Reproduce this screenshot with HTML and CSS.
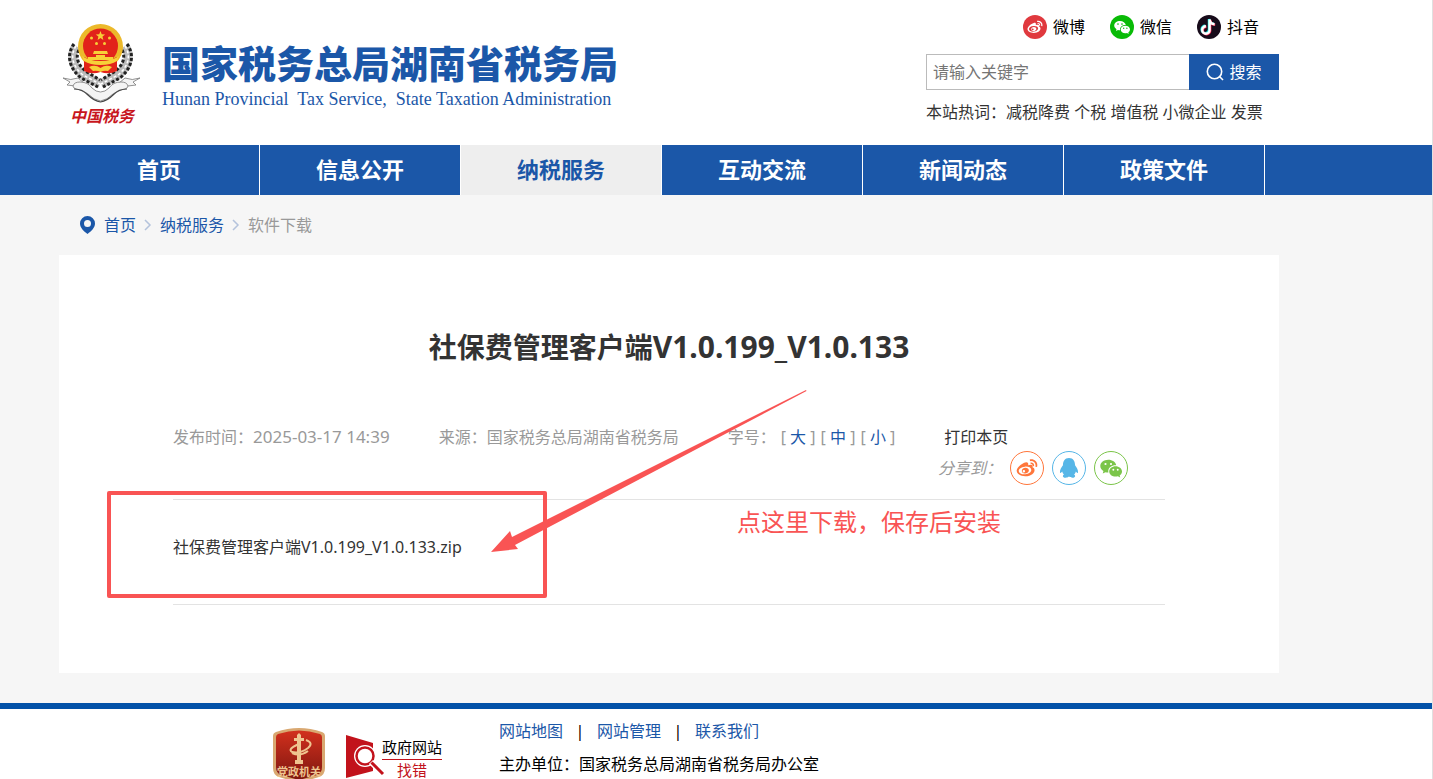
FILE: index.html
```html
<!DOCTYPE html>
<html lang="zh-CN">
<head>
    <meta charset="UTF-8">
    <meta name="viewport" content="width=device-width, initial-scale=1.0">
    <title>社保费管理客户端V1.0.199_V1.0.133</title>
    <link rel="stylesheet" href="styles.css">
</head>
<body>
    <header class="header wrap">
        <a class="logo" href="#">
            <span class="emblem">
                <svg width="80" height="80" viewBox="0 0 80 80" aria-hidden="true">
                    <!-- 麦穗 -->
                    <g fill="none" stroke="#bbb" stroke-width="9">
                        <path d="M14 22C8 31 10 42 21 51L38 60"/>
                        <path d="M63 22C69 31 67 42 56 51L39 60"/>
                    </g>
                    <g fill="none" stroke="#222" stroke-width="3" stroke-dasharray="3 2">
                        <path d="M12 20C4 31 7 44 19 54L36 63"/>
                        <path d="M65 20C73 31 70 44 58 54L41 63"/>
                        <path d="M17 26C13 33 16 42 25 48L38 56"/>
                        <path d="M60 26C64 33 61 42 52 48L39 56"/>
                    </g>
                    <g fill="none" stroke="#fff" stroke-width="1.5" stroke-dasharray="3 2">
                        <path d="M14 22C8 31 10 42 21 51L38 60"/>
                        <path d="M63 22C69 31 67 42 56 51L39 60"/>
                    </g>
                    <circle cx="38.500" cy="22.500" r="22.500" fill="#ecb92b"/>
                    <circle cx="38.500" cy="22" r="17.500" fill="#e2231a"/>
                    <path d="M22 33q16 8 33 0v14q-8 4-16.500 1Q30 51 22 47z" fill="#e2231a"/>
                    <g fill="#f7d038">
                        <path d="M38.500 7l1.200 3.200 3.400.2-2.600 2.200.8 3.300-2.800-1.800-2.900 1.800.8-3.300-2.600-2.200 3.400-.2z"/>
                        <circle cx="29.500" cy="14" r="1.500"/><circle cx="47.500" cy="14" r="1.500"/>
                        <circle cx="34.500" cy="19.500" r="1.500"/><circle cx="42.500" cy="19.500" r="1.500"/>
                        <path d="M32 27h13l1 3H31zM34 31h9v2h8v3H26v-3h8z"/>
                        <path d="M20 32q7 5 18.500 5T57 32l-2 5q-6 4-16.500 4T22 37z"/>
                        <path d="M27 43q6-3 11.500 1 5.500-4 11.500-1l-4 4q-4-1-7.500 1-3.500-2-7.500-1z"/>
                    </g>
                    <!-- 绶带 -->
                    <g fill="#f4f4f4" stroke="#777" stroke-width=".8">
                        <path d="M1 54q8 3 15 0l6 5-9 3-8-1 3-3zM78 54q-8 3-15 0l-6 5 9 3 8-1-3-3z"/>
                        <path d="M11 62q1-4 7-4 8 0 12 6 4 4 8.500 4T47 64q4-6 12-6 6 0 7 4 0 2-3 3-6 0-12 5-6 6-12.500 7Q32 76 26 70q-6-5-12-5-3-1-3-3z"/>
                    </g>
                    <path d="M12 65q8 0 14 6 6 6 12.500 7 6.500-1 12.500-7 6-6 14-6" fill="none" stroke="#444" stroke-width="1.2"/>
                </svg>
                <span class="emblem-text">中国税务</span>
            </span>
            <span class="logo-text">
                <strong class="logo-cn">国家税务总局湖南省税务局</strong>
                <span class="logo-en">Hunan Provincial&nbsp; Tax Service,&nbsp; State Taxation Administration</span>
            </span>
        </a>
        <div class="tools">
            <div class="social">
                <a href="#">
                    <svg width="24" height="24" viewBox="0 0 24 24"><circle cx="12" cy="12" r="12" fill="#e0393e"/><use href="#weibo" x="4" y="4" width="16" height="16" fill="#fff"/></svg>微博
                </a>
                <a href="#">
                    <svg width="24" height="24" viewBox="0 0 24 24"><circle cx="12" cy="12" r="12" fill="#09bb07"/><use href="#wechat" x="4" y="4" width="16" height="16" fill="#fff"/></svg>微信
                </a>
                <a href="#">
                    <svg width="24" height="24" viewBox="0 0 24 24">
                        <circle cx="12" cy="12" r="12" fill="#170b1a"/>
                        <g fill="none" stroke-width="2.400">
                            <path d="M12 4v10.500a3.700 3.700 0 1 1-3.700-3.700M12 4q.5 4.500 5 4.800" stroke="#25f4ee"/>
                            <path d="M13.200 5v10.500a3.700 3.700 0 1 1-3.700-3.700M13.200 5q.5 4.500 5 4.800" stroke="#fe2c55"/>
                            <path d="M12.600 4.500V15a3.700 3.700 0 1 1-3.700-3.700M12.600 4.500q.5 4.500 5 4.800" stroke="#fff"/>
                        </g>
                    </svg>抖音
                </a>
            </div>
            <form class="search">
                <input type="text" placeholder="请输入关键字" aria-label="请输入关键字">
                <button type="button">
                    <svg width="18" height="18" viewBox="0 0 18 18" fill="none" stroke="#fff" stroke-width="1.600"><circle cx="8.500" cy="8.500" r="7.200"/><path d="M13.500 13.500l3.500 3.500"/></svg>搜索
                </button>
            </form>
            <div class="hot">本站热词：<a href="#">减税降费</a> <a href="#">个税</a> <a href="#">增值税</a> <a href="#">小微企业</a> <a href="#">发票</a></div>
        </div>
    </header>

    <nav class="nav">
        <div class="wrap nav-list">
            <a href="#">首页</a>
            <a href="#">信息公开</a>
            <a href="#" class="active">纳税服务</a>
            <a href="#">互动交流</a>
            <a href="#">新闻动态</a>
            <a href="#">政策文件</a>
        </div>
    </nav>

    <main class="main">
        <div class="wrap">
            <div class="crumb">
                <svg width="17" height="18" viewBox="0 0 16 18"><path fill="#1b57a8" fill-rule="evenodd" d="M8 0a7.500 7.500 0 0 1 7.500 7.500C15.500 11.500 12 15 8 18 4 15 .5 11.500.5 7.500A7.500 7.500 0 0 1 8 0zm0 4a3.500 3.500 0 1 0 0 7 3.500 3.500 0 0 0 0-7z"/></svg>
                <a href="#">首页</a>
                <svg width="8" height="12" viewBox="0 0 8 12" class="arrow"><path d="M1 1l5 5-5 5"/></svg>
                <a href="#">纳税服务</a>
                <svg width="8" height="12" viewBox="0 0 8 12" class="arrow"><path d="M1 1l5 5-5 5"/></svg>
                <span>软件下载</span>
            </div>

            <article class="article">
                <h1>社保费管理客户端<span>V1.0.199_V1.0.133</span></h1>
                <div class="meta">
                    <span>发布时间：<span class="date">2025-03-17 14:39</span></span>
                    <span>来源：国家税务总局湖南省税务局</span>
                    <span class="sizes">字号：<span>[ <a href="#">大</a> ]</span><span>[ <a href="#">中</a> ]</span><span>[ <a href="#">小</a> ]</span></span>
                    <a href="#" class="print">打印本页</a>
                </div>
                <div class="share">
                    <em>分享到：</em>
                    <a href="#" class="weibo" aria-label="微博"><svg width="22" height="22" viewBox="0 0 16 16"><use href="#weibo"/></svg></a>
                    <a href="#" class="qq" aria-label="QQ"><svg width="22" height="22" viewBox="0 0 20 20"><path d="M10 1c-4 0-5.500 3-5.500 6.500C3 9.500 1.500 12 1.800 14c.2 1 1.200.2 2-.8.3 1.200.8 2 1.600 2.800-1.400.6-1.400 2.500.4 2.800 1.500.2 3 0 4.200-1 1.200 1 2.700 1.200 4.200 1 1.800-.3 1.800-2.200.4-2.800.8-.8 1.300-1.600 1.600-2.800.8 1 1.800 1.800 2 .8.3-2-1.200-4.500-2.700-6.500C15.500 4 14 1 10 1z"/></svg></a>
                    <a href="#" class="wechat" aria-label="微信"><svg width="22" height="22" viewBox="0 0 16 16"><use href="#wechat"/></svg></a>
                </div>
                <div class="attach">
                    <a href="#">社保费管理客户端V1.0.199_V1.0.133.zip</a>
                </div>

                <!-- 下载提示标注 -->
                <div class="mark-box"></div>
                <svg class="mark-arrow" width="318" height="166" viewBox="0 0 318 166"><path fill="#f95454" d="M1 162l19-21 2 6L316 0l.5 1L25 155l3 4z"/></svg>
                <p class="mark-text">点这里下载，保存后安装</p>
            </article>
        </div>
    </main>

    <footer class="footer">
        <div class="footer-in">
            <svg width="52" height="56" viewBox="0 0 52 56" class="party">
                <defs><linearGradient id="red" x2="0" y2="1"><stop offset="0" stop-color="#d2301d"/><stop offset="1" stop-color="#7e1710"/></linearGradient></defs>
                <path d="M0 9q0-3 3-4 23-8 46 0 3 1 3 4v32q0 7-6 9l-20 6-20-6q-6-2-6-9z" fill="#d9a871"/>
                <path d="M3 10q0-2 2-3 21-7 42 0 2 1 2 3v30q0 6-5 8l-18 5-18-5q-5-2-5-8z" fill="url(#red)"/>
                <g fill="#efc590"><path d="M24 8l2-2 2 2v3h3v3h-3v19h2v4h-8v-4h2V14h-3v-3h3z"/></g>
                <path d="M33 13q8 3 2 8-8 6-16 4-5-3 7-8M19 26q8 4 16-2" fill="none" stroke="#efc590" stroke-width="2"/>
                <text x="26" y="49" text-anchor="middle" class="party-text">党政机关</text>
            </svg>
            <a class="find-error" href="#">
                <svg width="40" height="44" viewBox="0 0 40 44"><path d="M0 0l27 8v28L0 43z" fill="#c2121b"/><circle cx="19" cy="21" r="11" fill="#fff"/><circle cx="19" cy="21" r="8.500" fill="#fff" stroke="#c2121b" stroke-width="2.500"/><path d="M25 27l12 12" stroke="#fff" stroke-width="6"/><path d="M25.500 27.500L37 39" stroke="#c2121b" stroke-width="3"/></svg>
                <span><b>政府网站</b><i>找错</i></span>
            </a>
            <div class="footer-info">
                <p class="footer-links"><a href="#">网站地图</a><span>|</span><a href="#">网站管理</a><span>|</span><a href="#">联系我们</a></p>
                <p>主办单位：国家税务总局湖南省税务局办公室</p>
            </div>
        </div>
    </footer>

    <svg class="symbols" aria-hidden="true">
        <symbol id="weibo" viewBox="0 0 16 16">
            <path fill-rule="evenodd" d="M6.800 4C8.500 3.500 9.200 4.500 8.800 6c2.200-.8 3.800-.3 3.200 1.500 3 1 1.600 6.500-5.300 6.500C2.500 14-.5 11.500.8 8.800 1.800 6.800 4.500 4.500 6.800 4zM6.500 7C3.600 7.200 1.800 8.800 2 10.300c.2 1.600 2.200 2.500 4.800 2.300 2.700-.2 4.500-1.800 4.300-3.300C10.900 7.700 9.100 6.800 6.500 7zM6.700 7.900c1.700-.1 2.900 1 2.600 2.300-.3 1.100-1.500 1.900-2.900 1.800-1.500-.1-2.400-1.100-2.100-2.300.2-1 1.200-1.700 2.400-1.800zM5.700 9.500a.9.900 0 1 0 .1 1.800.9.900 0 0 0-.1-1.800z"/>
            <path d="M10 1.800c3.500-.7 6.300 2 5.300 5.500l-1.200-.3c.7-2.500-1.300-4.500-3.900-4zM10.500 4c1.800-.3 3 1 2.600 2.700l-1.100-.2c.2-1-.4-1.600-1.300-1.400z"/>
        </symbol>
        <symbol id="wechat" viewBox="0 0 16 16">
            <path fill-rule="evenodd" d="M6 2c3 0 5.400 1.700 5.800 4C8.600 5.800 6 7.800 6 10.300l.1 1c-.8 0-1.400-.1-2.100-.3L2 12l.5-1.800C1 9.300.2 8 .2 6.600.2 4 2.800 2 6 2zM4 4.300a.8.800 0 1 0 0 1.600.8.800 0 0 0 0-1.600zm4 0a.8.800 0 1 0 0 1.600.8.800 0 0 0 0-1.600z"/>
            <path fill-rule="evenodd" d="M11.300 6.700c2.600 0 4.700 1.700 4.700 3.800 0 1.200-.7 2.200-1.700 2.900l.4 1.500-1.700-.9c-3.300.9-6.300-1-6.300-3.500 0-2.100 2-3.800 4.600-3.800zM9.700 8.600a.7.700 0 1 0 0 1.400.7.700 0 0 0 0-1.400zm3.200 0a.7.700 0 1 0 0 1.400.7.700 0 0 0 0-1.400z"/>
        </symbol>
    </svg>
</body>
</html>
```

FILE: styles.css
```css
* {
    box-sizing: border-box;
}
body {
    margin: 0;
    font-family: "Noto Sans", "Noto Sans CJK SC", sans-serif;
    font-size: 16px;
    line-height: 32px;
    color: #333;
    background: #fff;
    border-right: 1px solid #e0e0e0;
}
a {
    color: inherit;
    text-decoration: none;
}
p {
    margin: 0;
}
.wrap {
    max-width: 1279px;
    padding-left: 59px;
}
.symbols {
    display: none;
}

/* 头部 */
.header {
    display: flex;
    justify-content: space-between;
    height: 145px;
}
.logo {
    display: flex;
    color: #1b57a8;
}
.emblem {
    display: flex;
    flex-direction: column;
    align-items: center;
    width: 86px;
    padding-top: 24px;
}
.emblem-text {
    font-family: "Noto Sans CJK SC", sans-serif;
    font-size: 16px;
    line-height: 22px;
    font-style: italic;
    font-weight: bold;
    color: #c8161d;
}
.logo-text {
    display: flex;
    flex-direction: column;
    padding: 37px 0 0 17px;
    white-space: nowrap;
}
.logo-cn {
    font-family: "Noto Sans CJK SC", sans-serif;
    font-size: 38px;
    line-height: 50px;
    font-weight: 900;
}
.logo-en {
    font-family: "Liberation Serif", serif;
    font-size: 18px;
    line-height: 24px;
}
.tools {
    width: 353px;
    padding-top: 15px;
}
.social {
    display: flex;
    justify-content: flex-end;
    gap: 25px;
    padding-right: 20px;
    line-height: 24px;
    color: #000;
}
.social a {
    display: flex;
    gap: 6px;
}
.search {
    display: flex;
    height: 36px;
    margin: 15px 0 6px;
}
.search input {
    flex: 1;
    min-width: 0;
    padding: 0 6px;
    border: 1px solid #bbb;
    border-right: 0;
    font: inherit;
}
.search input::placeholder {
    color: #757575;
}
.search button {
    display: flex;
    align-items: center;
    justify-content: center;
    gap: 5px;
    width: 90px;
    padding: 0;
    border: 0;
    background: #1b57a8;
    color: #fff;
    font: inherit;
}
.hot {
    white-space: nowrap;
}

/* 导航 */
.nav {
    background: #1b57a8;
}
.nav-list {
    display: flex;
}
.nav a {
    width: 201px;
    height: 50px;
    border-right: 1px solid #fff;
    color: #fff;
    font-size: 22px;
    line-height: 48px;
    font-weight: bold;
    text-align: center;
}
.nav .active {
    background: #eee;
    color: #1b57a8;
}

/* 内容 */
.main {
    padding-bottom: 30px;
    background: #f6f6f6;
}
.crumb {
    display: flex;
    align-items: center;
    gap: 8px;
    height: 60px;
    padding-left: 20px;
    color: #999;
}
.crumb a {
    color: #1b57a8;
}
.crumb .arrow {
    fill: none;
    stroke: #b4c3dc;
    stroke-width: 1.5;
}
.article {
    position: relative;
    padding: 72px 114px 68px;
    background: #fff;
}
.article h1 {
    margin: 0 0 54px;
    font-size: 28px;
    line-height: 40px;
    text-align: center;
}
.article h1 span {
    font-size: 30px;
}
.meta {
    display: flex;
    gap: 49px;
    height: 30px;
    color: #999;
    white-space: nowrap;
}
.date {
    font-size: 17px;
}
.sizes {
    display: flex;
    gap: 5px;
}
.sizes a {
    color: #1b57a8;
}
.print {
    color: #333;
}
.share {
    display: flex;
    align-items: center;
    justify-content: flex-end;
    gap: 8px;
    padding: 0 37px 14px 0;
    color: #999;
}
.share a {
    display: flex;
    align-items: center;
    justify-content: center;
    width: 34px;
    height: 34px;
    border: 1px solid;
    border-radius: 50%;
}
.share svg {
    fill: currentColor;
}
.weibo {
    color: #ff763b;
}
.qq {
    color: #56b6e7;
}
.wechat {
    color: #7bc549;
}
.attach {
    padding: 31px 0 41px;
    border-top: 1px solid #e3e3e3;
    border-bottom: 1px solid #e3e3e3;
}
.mark-box {
    position: absolute;
    left: 48px;
    top: 236px;
    width: 440px;
    height: 107px;
    border: 4px solid #f95454;
    border-radius: 2px;
}
.mark-arrow {
    position: absolute;
    left: 431px;
    top: 135px;
}
.mark-text {
    position: absolute;
    left: 678px;
    top: 251px;
    font-size: 24px;
    color: #f95454;
}

/* 页脚 */
.footer {
    border-top: 6px solid #0352a8;
    color: #000;
    line-height: 33px;
}
.footer-in {
    display: flex;
    padding: 6px 0 0 273px;
}
.party {
    margin-top: 12px;
}
.party-text {
    font-size: 11px;
    font-weight: bold;
    fill: #efc590;
}
.find-error {
    display: flex;
    width: 153px;
    margin: 20px 0 0 21px;
}
.find-error svg {
    flex: none;
}
.find-error span {
    display: flex;
    flex-direction: column;
    margin-left: -4px;
    text-align: center;
}
.find-error b {
    border-bottom: 1px solid #c2121b;
    font-size: 15px;
    line-height: 24px;
    font-weight: normal;
}
.find-error i {
    color: #c2121b;
    font-size: 15px;
    line-height: 20px;
    font-style: normal;
}
.footer-links {
    display: flex;
    color: #1b57a8;
}
.footer-links span {
    width: 34px;
    color: #000;
    text-align: center;
}
```
